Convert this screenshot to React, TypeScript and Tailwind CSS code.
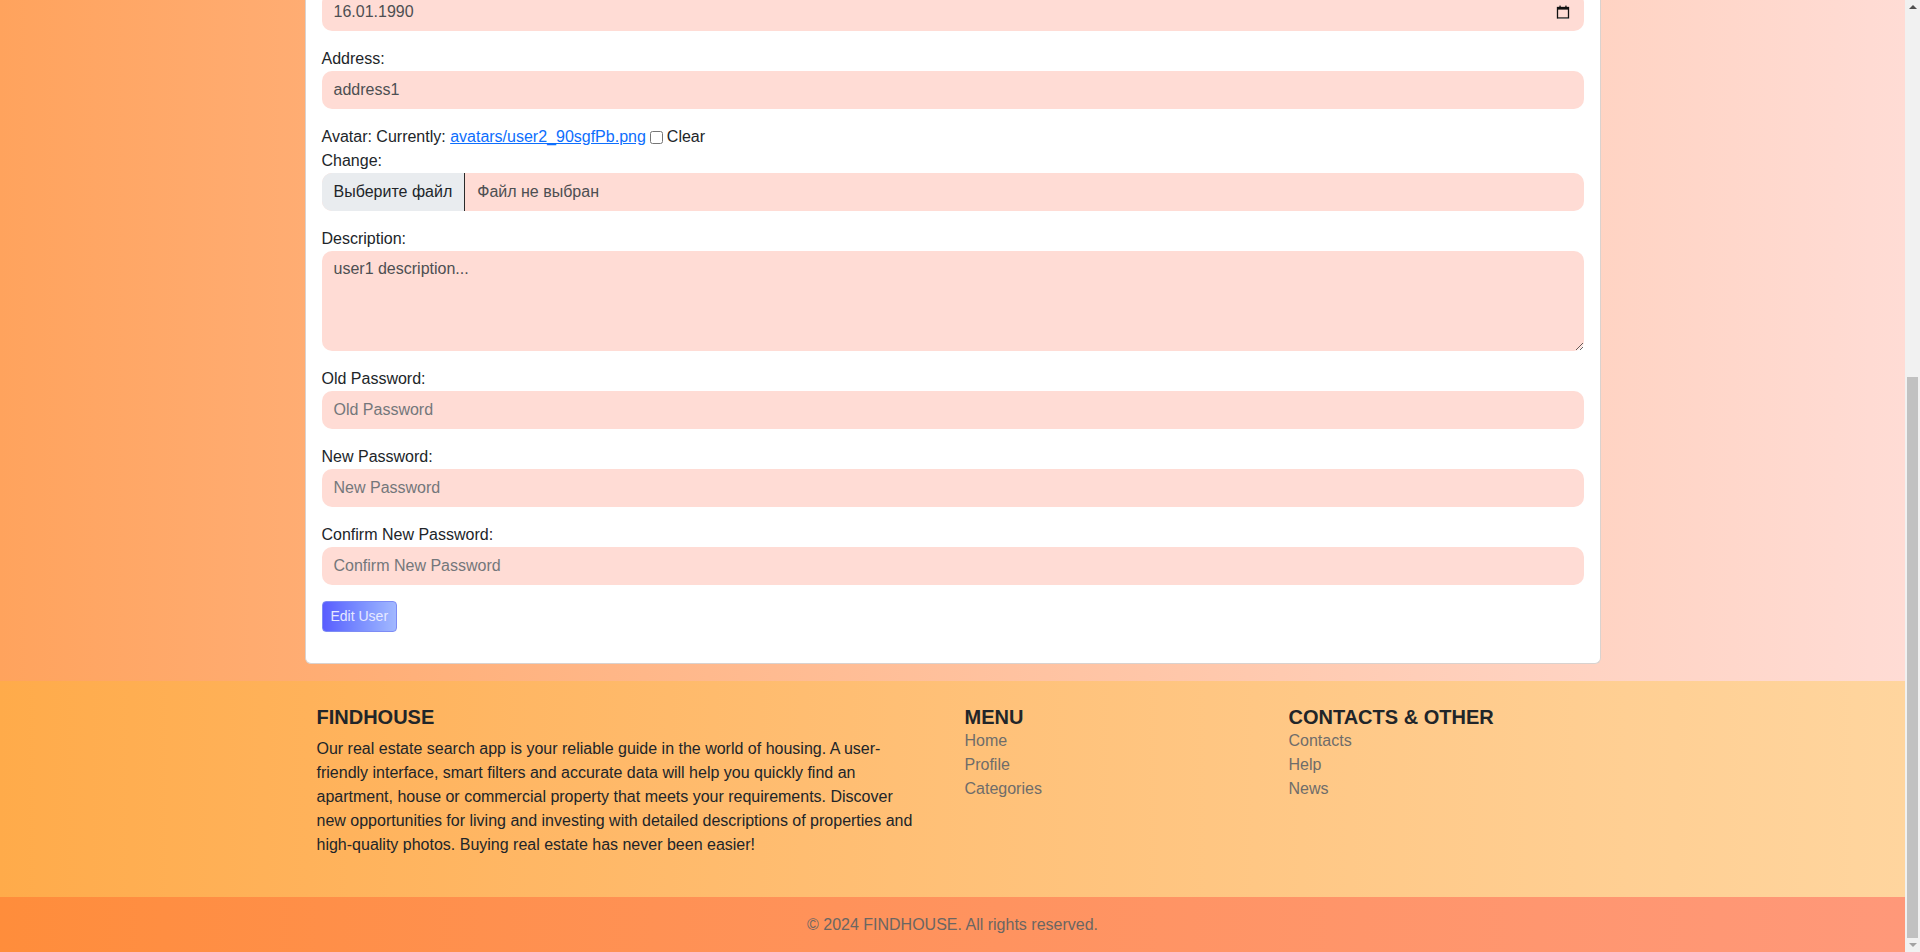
import React from "react";

const font = { fontFamily: '"Liberation Sans", Arial, sans-serif' };

function Label({ children }: { children: React.ReactNode }) {
  return <div className="h-6 leading-6 text-[16px] text-[#212529]">{children}</div>;
}

function TextInput({ placeholder, value }: { placeholder?: string; value?: string }) {
  return (
    <div className="flex h-[38px] w-full items-center rounded-[10px] bg-[#ffdcd5] px-3 text-[16px] leading-6">
      {value ? (
        <span className="text-[#4d4f52]">{value}</span>
      ) : (
        <span className="text-[#74777b]">{placeholder}</span>
      )}
    </div>
  );
}

function CalendarIcon() {
  return (
    <svg width="14" height="14" viewBox="0 0 14 14" className="block">
      <rect x="1.5" y="2.5" width="11" height="10.5" fill="none" stroke="#111" strokeWidth="1.3" />
      <rect x="1" y="2" width="12" height="2.6" fill="#111" />
      <rect x="3.4" y="0.6" width="1.3" height="2" fill="#111" />
      <rect x="9.3" y="0.6" width="1.3" height="2" fill="#111" />
      <line x1="2" y1="13.6" x2="13" y2="13.6" stroke="#888" strokeWidth="0.8" />
    </svg>
  );
}

const aboutLines = [
  "Our real estate search app is your reliable guide in the world of housing. A user-",
  "friendly interface, smart filters and accurate data will help you quickly find an",
  "apartment, house or commercial property that meets your requirements. Discover",
  "new opportunities for living and investing with detailed descriptions of properties and",
  "high-quality photos. Buying real estate has never been easier!",
];

export default function App() {
  return (
    <div className="flex h-[952px] w-[1920px] overflow-hidden" style={font}>
      <div className="flex min-w-0 flex-1 flex-col">
        <main className="bg-gradient-to-r from-[#ffa35d] to-[#ffdcd5] pb-[17px]">
          <div className="mx-auto w-[1296px]">
            <div className="rounded-b-[6px] border border-t-0 border-[#d9d2cf] bg-white px-4 pb-[31px]">
              <div className="-mt-[7px] mb-4 flex h-[38px] w-full items-center justify-between rounded-[10px] bg-[#ffdcd5] pl-3 pr-[14px] text-[16px] leading-6">
                <span className="text-[#4d4f52]">16.01.1990</span>
                <CalendarIcon />
              </div>

              <div className="mb-4">
                <Label>Address:</Label>
                <TextInput value="address1" />
              </div>

              <div className="mb-4">
                <div className="flex h-6 items-center leading-6 text-[16px] text-[#212529]">
                  <span>Avatar: Currently:&nbsp;</span>
                  <a href="#" className="text-[#0d6efd] underline">avatars/user2_90sgfPb.png</a>
                  <input type="checkbox" className="ml-[4px] mr-[4px] h-[13px] w-[13px]" readOnly />
                  <span>Clear</span>
                </div>
                <Label>Change:</Label>
                <div className="flex h-[38px] w-full items-center overflow-hidden rounded-[10px] bg-[#ffdcd5] text-[16px] leading-6">
                  <div className="flex h-full items-center border-r border-[#2a2a2a] bg-[#e9ecef] px-3 text-[#212529]">
                    Выберите файл
                  </div>
                  <span className="pl-3 text-[#4d4f52]">Файл не выбран</span>
                </div>
              </div>

              <div className="mb-4">
                <Label>Description:</Label>
                <textarea
                  readOnly
                  defaultValue="user1 description..."
                  className="block h-[100px] w-full resize-y rounded-[10px] bg-[#ffdcd5] px-3 py-1.5 text-[16px] leading-6 text-[#4d4f52] outline-none"
                  style={font}
                />
              </div>

              <div className="mb-4">
                <Label>Old Password:</Label>
                <TextInput placeholder="Old Password" />
              </div>
              <div className="mb-4">
                <Label>New Password:</Label>
                <TextInput placeholder="New Password" />
              </div>
              <div className="mb-4">
                <Label>Confirm New Password:</Label>
                <TextInput placeholder="Confirm New Password" />
              </div>

              <button className="h-[31px] rounded-[4px] border border-[#7d8cf5] bg-gradient-to-r from-[#5a5cff] to-[#a2b8ff] px-2 text-[14px] leading-[21px] text-[#e6e9ff]">
                Edit User
              </button>
            </div>
          </div>
        </main>

        <footer>
          <div className="bg-gradient-to-r from-[#ffab4a] to-[#ffd59e] py-6">
            <div className="mx-auto grid w-[1296px] grid-cols-4">
              <div className="col-span-2 px-3">
                <h5 className="mb-2 text-[20px] font-bold leading-6 text-[#212529]">FINDHOUSE</h5>
                <p className="mb-4 text-[16px] leading-6 text-[#212529]">
                  {aboutLines.map((l) => (
                    <span key={l} className="block whitespace-nowrap">{l}</span>
                  ))}
                </p>
              </div>
              <div className="px-3">
                <h5 className="text-[20px] font-bold leading-6 text-[#212529]">MENU</h5>
                <ul className="text-[16px] leading-6 text-[#6f6d6a]">
                  <li>Home</li>
                  <li>Profile</li>
                  <li>Categories</li>
                </ul>
              </div>
              <div className="px-3">
                <h5 className="text-[20px] font-bold leading-6 text-[#212529]">CONTACTS &amp; OTHER</h5>
                <ul className="text-[16px] leading-6 text-[#6f6d6a]">
                  <li>Contacts</li>
                  <li>Help</li>
                  <li>News</li>
                </ul>
              </div>
            </div>
          </div>
          <div className="flex h-[55px] items-center justify-center bg-gradient-to-r from-[#ff8d3b] to-[#ff9879] text-[16px] leading-6 text-[#6b6662]">
            © 2024 FINDHOUSE. All rights reserved.
          </div>
        </footer>
      </div>

      <div className="relative h-full w-[15px] shrink-0 bg-[#f1f1f1]">
        <div className="absolute left-1/2 top-[5px] h-0 w-0 -translate-x-1/2 border-x-[4px] border-b-[4px] border-x-transparent border-b-[#505050]" />
        <div className="absolute left-[2px] right-[2px] top-[377px] h-[561px] bg-[#c1c1c1]" />
        <div className="absolute bottom-[5px] left-1/2 h-0 w-0 -translate-x-1/2 border-x-[4px] border-t-[4px] border-x-transparent border-t-[#a3a3a3]" />
      </div>
    </div>
  );
}
